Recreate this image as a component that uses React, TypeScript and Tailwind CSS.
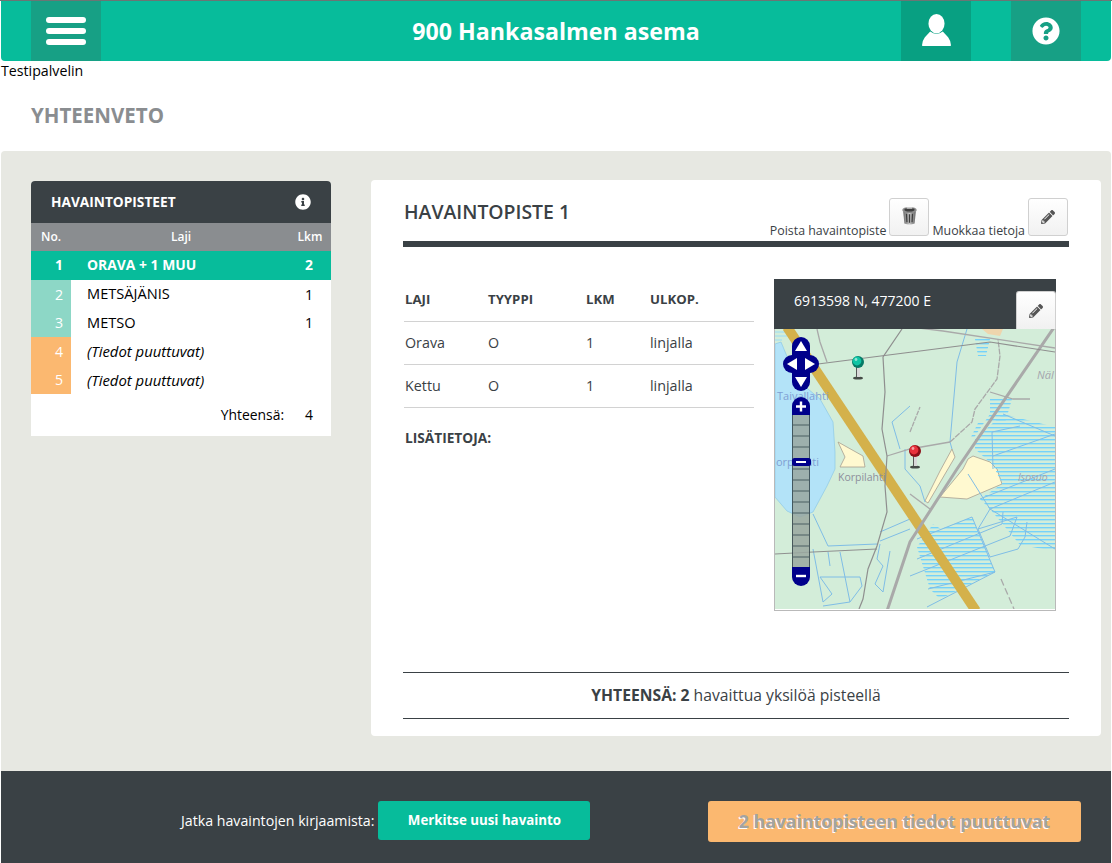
import React from "react";
import { FaPencilAlt, FaQuestionCircle, FaInfoCircle } from "react-icons/fa";

const rows = [
  { n: "1", name: "ORAVA + 1 MUU", c: "2", kind: "active" },
  { n: "2", name: "METSÄJÄNIS", c: "1", kind: "done" },
  { n: "3", name: "METSO", c: "1", kind: "done" },
  { n: "4", name: "(Tiedot puuttuvat)", c: "", kind: "missing" },
  { n: "5", name: "(Tiedot puuttuvat)", c: "", kind: "missing" },
];

function Pin({ x, y, color, dark }: { x: number; y: number; color: string; dark: string }) {
  return (
    <g>
      <ellipse cx={x} cy={y + 16} rx={5} ry={1.6} fill="#222" opacity={0.8} />
      <rect x={x - 2} y={y + 3} width={4} height={12} fill="#d8d8d8" />
      <rect x={x - 2} y={y + 3} width={1} height={12} fill="#555" />
      <circle cx={x} cy={y} r={6} fill={dark} />
      <circle cx={x - 1} cy={y - 1} r={4.4} fill={color} />
      <circle cx={x - 2} cy={y - 2.5} r={1.4} fill="#fff" opacity={0.55} />
    </g>
  );
}

function MapDrawing() {
  const blue = "#7fbde6";
  const grey = "#a9a9a9";
  const thin = "#8f8f8f";
  return (
    <svg viewBox="775 330 280 280" className="block h-[280px] w-[280px]">
      <defs>
        <pattern id="hatch" x="0" y="0" width="6" height="4" patternUnits="userSpaceOnUse">
          <rect width="6" height="1.4" fill="#74d2fa" />
        </pattern>
      </defs>
      <rect x="775" y="330" width="280" height="280" fill="#d3edd9" />
      <path d="M775 345L781 343L791 367L802 385L820 400L833 423L835 453L835 470L827 487L813 513L800 518L787 512L775 498Z" fill="#b3e3f8" stroke="#8dc8e6" strokeWidth="0.7" />
      <path d="M775 333H785M775 337H787M775 341H782" stroke="#9bdcf5" strokeWidth="1" />
      <path d="M982 330L1003 330L1000 337L988 335Z" fill="#eed5ad" />
      <path d="M838 443L863 457L865 468L840 468L845 458Z" fill="#fff9d0" stroke="#a8a090" strokeWidth="0.8" />
      <path d="M952 450L955 458L928 504L925 502L940 472Z" fill="#fff9d0" stroke="#a8a090" strokeWidth="0.8" />
      <path d="M963 470L968 460L973 457L990 463L997 470L1002 485L967 500L940 498Z" fill="#fff9d0" stroke="#a8a090" strokeWidth="0.8" />
      <path d="M975 340H990L986 357H978ZM990 400H1012L1005 424H978L970 440H973L990 415Z" fill="url(#hatch)" />
      <path d="M1003 415L1055 428V552L1020 546L990 510L980 500L1002 485L993 466L975 450L975 440Z" fill="url(#hatch)" />
      <path d="M972 518L995 573L940 600L930 590L917 548L933 525L941 530Z" fill="url(#hatch)" />
      <g fill="none" stroke={blue} strokeWidth="1">
        <path d="M967 330L957 363L950 443L952 450" />
        <path d="M992 433L1020 427M992 433L993 470M993 457L1055 435M1003 415L1055 437" />
        <path d="M968 475L990 510L1055 550M990 510L1055 483M980 500L1055 470M990 510L978 530L1017 518L1010 537L910 577M1003 513L1002 525L917 560M1027 523L1025 538L1018 550L990 558" />
        <path d="M972 518L995 573L927 608M972 518L917 540M995 573L928 590M978 530L990 558" />
        <path d="M813 515L828 547L877 545M910 520L880 533M910 530L880 542M813 550L823 603L832 595L820 578L860 578L862 587L850 603L823 607M840 553L850 603M890 552L883 593L875 585L883 567L877 560L880 545M828 553L830 567" />
        <path d="M910 407L892 423L900 450M905 450V470L920 487L925 503" />
      </g>
      <path d="M787 328L976 612" stroke="#d4b14b" strokeWidth="10" />
      <g fill="none" stroke={grey} strokeWidth="3">
        <path d="M1055 327L957 470L910 543L887 612" />
      </g>
      <g fill="none" stroke={grey} strokeWidth="1.3">
        <path d="M910 328L943 332L1055 349" />
        <path d="M817 330L820 343L827 363" />
        <path d="M950 443L972 423L975 410L997 380L1000 357L998 340" strokeDasharray="6 1" />
        <path d="M990 393L1013 400L1030 400" />
        <path d="M910 433L920 408" strokeDasharray="5 1" />
        <path d="M887 457L910 450L950 443" />
        <path d="M1001 580L1014 610" strokeDasharray="7 3" />
        <path d="M910 495L930 510" />
      </g>
      <g fill="none" stroke={thin} strokeWidth="1.2">
        <path d="M818 365L920 352L990 343L1055 353" />
        <path d="M902 330L883 358L885 393L882 430L887 457L885 487L887 513L877 547L868 570L863 600L859 610" />
        <path d="M775 555L813 553L877 550" />
      </g>
      <text x="777" y="401" fontSize="11" fill="#7f9fd3" fontFamily="Open Sans, sans-serif">Taivallahti</text>
      <text x="776" y="467" fontSize="11" fill="#7f9fd3" fontFamily="Open Sans, sans-serif">orpilahti</text>
      <text x="838" y="482" fontSize="10.5" fill="#8d8d9b" fontFamily="Open Sans, sans-serif">Korpilahti</text>
      <text x="1037" y="380" fontSize="11" fontStyle="italic" fill="#a4a4ae" fontFamily="Open Sans, sans-serif">Näl</text>
      <text x="1018" y="482" fontSize="10.5" fontStyle="italic" fill="#a4a4ae" fontFamily="Open Sans, sans-serif">Isosuo</text>
      <Pin x={858} y={363} color="#0fc4a4" dark="#067a66" />
      <Pin x={915} y={452} color="#e8323c" dark="#8c1018" />
      {/* pan control */}
      <g fill="#00008b">
        <rect x="792" y="338" width="18" height="54" rx="9" />
        <rect x="783" y="356" width="36" height="18" rx="9" />
      </g>
      <g fill="#fff">
        <path d="M801 342L807 352H795Z" />
        <path d="M801 388L807 378H795Z" />
        <path d="M787 365L797 359V371Z" />
        <path d="M815 365L805 359V371Z" />
      </g>
      {/* zoom bar */}
      <rect x="792.5" y="410" width="17" height="160" fill="#9aa8a0" opacity="0.85" stroke="#2f3f45" />
      <g stroke="#4a5e63" strokeWidth="1.2">
        <path d="M793 426H809M793 437H809M793 448H809M793 470H809M793 481H809M793 492H809M793 503H809M793 514H809M793 525H809M793 536H809M793 547H809M793 558H809" />
      </g>
      <path d="M792 416V407A9 9 0 0 1 810 407V416Z" fill="#00008b" />
      <path d="M792 568H810V578A9 9 0 0 1 792 578Z" fill="#00008b" />
      <rect x="792" y="459" width="19" height="8" rx="2.5" fill="#00008b" />
      <path d="M796 407.5H806M801 402.5V412.5" stroke="#fff" strokeWidth="2.4" />
      <path d="M796 577H806" stroke="#fff" strokeWidth="2.4" />
      <path d="M796 463H806" stroke="#fff" strokeWidth="2" />
    </svg>
  );
}

function IconButton({ children, className }: { children: React.ReactNode; className?: string }) {
  return (
    <span className={`inline-flex h-[38px] w-10 items-center justify-center rounded-[3px] border border-[#d0d0d0] bg-gradient-to-b from-white to-[#f1f1f1] ${className ?? ""}`}>
      {children}
    </span>
  );
}

function Trash() {
  return (
    <svg viewBox="0 0 20 22" className="mb-[4px] h-[19px] w-[17px]">
      <defs>
        <linearGradient id="bin" x1="0" x2="1" y1="0" y2="0">
          <stop offset="0" stopColor="#6d6d6d" />
          <stop offset="0.5" stopColor="#c2c2c2" />
          <stop offset="1" stopColor="#666" />
        </linearGradient>
      </defs>
      <path d="M2.5 6L4 20.5Q10 22.5 16 20.5L17.5 6Z" fill="url(#bin)" />
      <path d="M6.5 9L7 19M10 9.5V19.5M13.5 9L13 19" stroke="#3d3d3d" strokeWidth="1.5" />
      <ellipse cx="10" cy="4.5" rx="8.5" ry="3.6" fill="#8b8b8b" />
      <ellipse cx="10" cy="4.2" rx="6" ry="2.1" fill="#3d3d3d" />
      <rect x="6.5" y="1" width="7" height="2" rx="1" fill="#cfcfcf" />
    </svg>
  );
}

export default function App() {
  return (
    <div className="flex h-[863px] w-[1112px] flex-col overflow-hidden bg-white font-['Open_Sans',sans-serif] text-[14.2px] text-black">
      <div className="border-t border-[#6b7574]" />
      <header className="mx-px flex h-[60px] items-stretch rounded-b-[4px] bg-[#07bc9b] pl-[30px] pr-[30px] text-white">
        <button className="flex w-[70px] flex-col items-center justify-center gap-[5px] bg-[#17a085]">
          <span className="h-1.5 w-10 rounded-full bg-white" />
          <span className="h-1.5 w-10 rounded-full bg-white" />
          <span className="h-1.5 w-10 rounded-full bg-white" />
        </button>
        <h1 className="flex-1 pl-[110px] text-center text-[23.2px] font-bold leading-[61px]">900 Hankasalmen asema</h1>
        <div className="flex w-[70px] items-center justify-center bg-[#08a082]">
          <svg viewBox="0 0 32 34" className="mb-[2px] h-[33px] w-[31px] fill-white">
            <ellipse cx="16" cy="10" rx="8.3" ry="10" />
            <path d="M9.5 18Q16 23 22.5 18L28 24Q31 28 31 32.5Q31 33 30 33H2Q1 33 1 32.5Q1 28 4 24Z" />
          </svg>
        </div>
        <div className="w-10" />
        <div className="flex w-[70px] items-center justify-center bg-[#17a085]">
          <FaQuestionCircle className="h-7 w-7 text-white" />
        </div>
      </header>
      <div className="px-px leading-[20px]">Testipalvelin</div>
      <h2 className="h-[70px] pl-[31px] pt-[21px] text-[20.5px] font-bold leading-[27px] text-[#8a8d90]">YHTEENVETO</h2>
      <main className="mx-px flex h-[620px] items-start gap-10 rounded-t-[4px] bg-[#e7e8e2] pl-[30px] pr-[10px] pt-[29px]">
        <section className="mt-px w-[300px] overflow-hidden rounded-t-[4px] bg-white">
          <div className="flex h-[42px] items-center justify-between bg-[#3a4145] pl-5 pr-[20px] text-[13.7px] font-bold text-white">
            <span>HAVAINTOPISTEET</span>
            <FaInfoCircle className="h-4 w-4" />
          </div>
          <div className="flex h-7 items-center bg-[#8a8d90] text-[12px] font-semibold text-white">
            <span className="w-10 text-center">No.</span>
            <span className="flex-1 text-center">Laji</span>
            <span className="w-10 pr-[2px] text-center">Lkm</span>
          </div>
          {rows.map((r, i) => (
            <div
              key={r.n}
              className={`flex items-center ${i === 0 ? "h-[29px] bg-[#07bc9b] text-[13.9px] font-bold text-white" : "h-[28.5px]"}`}
            >
              <span
                className={`flex h-full w-10 items-center justify-end pr-2 ${
                  r.kind === "done" ? "bg-[#8dd7c6] text-white" : r.kind === "missing" ? "bg-[#fbb870] text-white" : ""
                }`}
              >
                {r.n}
              </span>
              <span className={`flex-1 pl-4 ${r.kind === "missing" ? "text-[14.9px] italic" : r.kind === "done" ? "text-[14.6px]" : ""}`}>{r.name}</span>
              <span className="pr-[18px]">{r.c}</span>
            </div>
          ))}
          <div className="flex h-[42px] items-center justify-end pr-[18px] pt-px text-[13.9px]">
            <span className="mr-[21px]">Yhteensä:</span>
            <span>4</span>
          </div>
        </section>
        <section className="flex h-[556px] w-[730px] flex-col rounded-[4px] bg-white pl-8 pr-8 pt-[18px]">
          <div className="flex h-[43px] items-start justify-between text-[#3a4145]">
            <h3 className="pl-px text-[19.4px] font-semibold leading-[28px]">HAVAINTOPISTE 1</h3>
            <div className="flex items-end text-[12.4px] leading-[16px]">
              <span className="mb-[-3px]">Poista havaintopiste</span>
              <IconButton className="ml-[3px]"><Trash /></IconButton>
              <span className="mb-[-3px] ml-[3px]">Muokkaa tietoja</span>
              <IconButton className="ml-[3px] mr-px"><FaPencilAlt className="h-[14px] w-[14px] text-[#555]" /></IconButton>
            </div>
          </div>
          <div className="h-[6px] w-[666px] bg-[#3a4145]" />
          <div className="flex flex-1 justify-between pt-8">
            <div className="w-[351px] pl-px text-[14.3px] text-[#3a4145]">
              <div className="flex h-[43px] items-center border-b border-[#d2d2d2] text-[13.2px] font-bold">
                <span className="w-[84px] pl-px">LAJI</span>
                <span className="w-[98px]">TYYPPI</span>
                <span className="w-16">LKM</span>
                <span>ULKOP.</span>
              </div>
              {["Orava", "Kettu"].map((s) => (
                <div key={s} className="flex h-[43px] items-center border-b border-[#d2d2d2]">
                  <span className="w-[84px] pl-px">{s}</span>
                  <span className="w-[98px]">O</span>
                  <span className="w-16">1</span>
                  <span>linjalla</span>
                </div>
              ))}
              <div className="pl-px pt-[21px] text-[13.7px] font-bold leading-[18px]">LISÄTIETOJA:</div>
            </div>
            <div className="relative mr-[13px] h-[332px] w-[282px] border-x border-b border-[#b9b9b9]">
              <div className="-mx-px flex h-[50px] items-start bg-[#3a4145] pl-5 pt-[13px] text-[14px] leading-[18px] text-white">
                6913598 N, 477200 E
              </div>
              <MapDrawing />
              <IconButton className="absolute right-[-1px] top-3 rounded-b-none border-b-0"><FaPencilAlt className="h-[14px] w-[14px] text-[#555]" /></IconButton>
            </div>
          </div>
          <div className="mb-[17px] flex h-[47px] items-center justify-center border-y border-[#3a4145] pt-px text-[15.7px] text-[#3a4145]">
            <span><b>YHTEENSÄ: 2</b> havaittua yksilöä pisteellä</span>
          </div>
        </section>
      </main>
      <footer className="mx-px flex h-[92px] items-start bg-[#3a4145] pl-[180px] pr-[30px] pt-[30px] text-white">
        <span className="mr-1 leading-[39px]">Jatka havaintojen kirjaamista:</span>
        <button className="h-[39px] w-[212px] rounded-[3px] bg-[#07bc9b] text-[13.3px] font-bold">Merkitse uusi havainto</button>
        <button className="ml-auto h-[41px] w-[373px] rounded-[3px] bg-[#fbb870] text-[17.7px] font-bold text-[#a3a3a3] [text-shadow:-1px_1px_0_#fff]">
          2 havaintopisteen tiedot puuttuvat
        </button>
      </footer>
    </div>
  );
}
